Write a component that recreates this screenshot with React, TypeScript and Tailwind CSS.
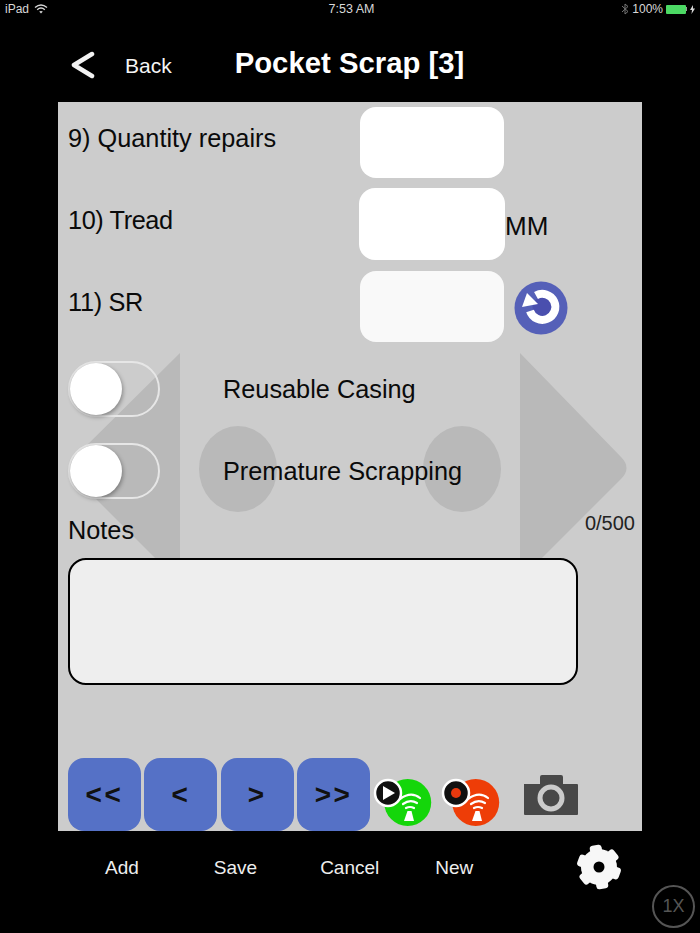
import React from "react";

const font = "font-['Liberation_Sans',Arial,sans-serif]";

const WifiBadge = ({ color, record }: { color: string; record?: boolean }) => (
    <svg width="60" height="56" viewBox="0 0 60 56">
        <circle cx="34.7" cy="29.5" r="23.5" fill={color} />
        <g fill="none" stroke="#fff" strokeWidth="2.2" strokeLinecap="round">
            <path d="M27 26 Q38 18 47 25" />
            <path d="M30 31 Q37 26 44 30" />
            <path d="M33 35 Q37 33 41 35" />
        </g>
        <path d="M34.5 38 L38.5 38 L41 48 L31 48 Z" fill="#fff" />
        <circle cx="15" cy="20" r="13" fill="#111" stroke="#fff" strokeWidth="2.5" />
        {record ? <circle cx="15" cy="20" r="5" fill="#e8390e" /> : <path d="M10 13 L22 20 L10 27 Z" fill="#fff" />}
    </svg>
);

const Camera = () => (
    <svg width="56" height="42" viewBox="0 0 56 42">
        <path d="M1 10 H17 V3 Q17 1 19 1 H38 Q40 1 40 3 V10 H54 Q55 10 55 11 V40 Q55 41 54 41 H2 Q1 41 1 40 Z" fill="#484848" />
        <circle cx="28" cy="24" r="11" fill="none" stroke="#cbcbcb" strokeWidth="5" />
    </svg>
);

const Gear = () => (
    <svg width="46" height="46" viewBox="0 0 46 46">
        <g transform="rotate(-10 23 23)" fill="#f7f7f7">
            <circle cx="23" cy="23" r="18" />
            <rect x="17" y="1" width="12" height="44" rx="3" />
            <rect x="17" y="1" width="12" height="44" rx="3" transform="rotate(60 23 23)" />
            <rect x="17" y="1" width="12" height="44" rx="3" transform="rotate(120 23 23)" />
        </g>
        <circle cx="23" cy="23" r="5.5" fill="#000" />
    </svg>
);

const Reset = () => (
    <svg width="54" height="54" viewBox="0 0 54 54" className="ml-[10px] mt-[2px]">
        <circle cx="27" cy="27" r="26.5" fill="#5560b8" />
        <circle cx="28.5" cy="26" r="10" fill="#4a4fae" />
        <path d="M22 14.5 A13 13 0 1 1 16 30" fill="none" stroke="#fff" strokeWidth="8" />
        <path d="M13 12 L8 26 L24 23 Z" fill="#fff" />
    </svg>
);

const FieldRow = ({ label, children, className = "", inputClass = "w-[145px] h-[71px] bg-white", labelClass = "" }: { label: string; children?: React.ReactNode; className?: string; inputClass?: string; labelClass?: string }) => (
    <div className={`flex items-center ${className}`}>
        <div className={`w-[292px] text-[25.3px] leading-none text-[#0a0a0a] pb-[8px] ${labelClass}`}>{label}</div>
        <div className={`rounded-[16px] ${inputClass}`}></div>
        {children}
    </div>
);

const Toggle = ({ label }: { label: string }) => (
    <div className="flex items-center h-[56px]">
        <div className="relative w-[92px] h-[56px] rounded-full border-2 border-[#e6e6e6]">
            <div className="absolute left-0 top-0 w-[52px] h-[52px] rounded-full bg-white shadow-[1px_2px_4px_rgba(0,0,0,0.35)]"></div>
        </div>
        <span className="ml-[63px] text-[25.3px] leading-none text-[#0a0a0a] mt-[1px]">{label}</span>
    </div>
);

const NavButton = ({ label }: { label: string }) => (
    <button className="w-[72.9px] h-[73px] rounded-[16px] bg-[#5571c6] text-[28px] font-bold tracking-[2.5px] text-[#111]">{label}</button>
);

const BarLabel = ({ label, className }: { label: string; className: string }) => (
    <span className={`text-[19px] leading-none text-[#eeeeee] mt-[1px] ${className}`}>{label}</span>
);

const App = () => {
    return (
        <div className={`relative w-[700px] h-[933px] bg-black overflow-hidden ${font}`}>
            {/* status bar */}
            <div className="flex items-center justify-between h-[18px] px-[5px] text-[12px] text-[#d8d8d8]">
                <div className="flex items-center gap-[5px] w-[120px]">
                    <span>iPad</span>
                    <svg width="14" height="10" viewBox="0 0 14 10" fill="none" stroke="#d8d8d8" strokeWidth="1.4">
                        <path d="M1 3.5 Q7 -1.5 13 3.5" />
                        <path d="M3.2 5.7 Q7 2.5 10.8 5.7" />
                        <path d="M7 9.5 L5.2 7.6 Q7 6.2 8.8 7.6 Z" fill="#d8d8d8" stroke="none" />
                    </svg>
                </div>
                <span className="pl-[3px] text-[12.5px]">7:53 AM</span>
                <div className="flex items-center justify-end gap-[3px] w-[120px]">
                    <svg width="8" height="12" viewBox="0 0 8 12" fill="none" stroke="#777" strokeWidth="1">
                        <path d="M1 3 L7 8.5 L4 11 V1 L7 3.5 L1 9" />
                    </svg>
                    <span>100%</span>
                    <div className="w-[20px] h-[9px] bg-[#4cd964] rounded-[1px]"></div>
                    <div className="w-[1px] h-[4px] bg-[#999] -ml-[3px]"></div>
                    <svg width="5" height="9" viewBox="0 0 5 9"><path d="M3 0 L0 5 H2 L1.5 9 L5 3.5 H3 Z" fill="#d8d8d8" /></svg>
                </div>
            </div>

            {/* header */}
            <div className="flex items-center h-[84px] text-white">
                <svg width="24" height="28" viewBox="0 0 24 28" className="ml-[71px] mt-[10px]" fill="none" stroke="#f2f2f2" strokeWidth="4.5" strokeLinecap="round" strokeLinejoin="round">
                    <path d="M21 3 L3 14 L21 25" />
                </svg>
                <span className="ml-[30px] mt-[11px] text-[21px] font-medium text-[#f5f5f5]">Back</span>
                <span className="ml-[63px] mt-[6px] text-[29.3px] font-bold">Pocket Scrap [3]</span>
            </div>

            {/* panel */}
            <div className="relative mx-[58px] h-[729px] bg-[#cccccc] pl-[10px] pt-[5px]">
                {/* faded background arrows */}
                <svg width="584" height="210" viewBox="0 0 584 210" className="absolute left-0 top-[251px]" fill="#b9b9b9">
                    <path d="M122 0 V205 H97 L17 125 Q6 115 17 104 Z" />
                    <ellipse cx="180" cy="116" rx="39" ry="43" />
                    <ellipse cx="404" cy="116" rx="39" ry="43" />
                    <path d="M462 0 L563 104 Q574 115 563 126 L484 205 H462 Z" />
                </svg>

                <div className="relative flex flex-col h-full">
                    <FieldRow label="9) Quantity repairs" inputClass="w-[144px] h-[71px] bg-white" />
                    <FieldRow label="10) Tread" className="mt-[10px]" labelClass="tracking-[-0.4px] pt-[1px]" inputClass="w-[146px] h-[72px] -ml-[1px] bg-white">
                        <span className="text-[26px] leading-none text-[#0a0a0a] mt-[3px]">MM</span>
                    </FieldRow>
                    <FieldRow label="11) SR" className="mt-[11px]" labelClass="tracking-[-0.3px]" inputClass="w-[144px] h-[71px] bg-[#f9f9f9]">
                        <Reset />
                    </FieldRow>

                    <div className="flex flex-col gap-[26px] mt-[19px]">
                        <Toggle label="Reusable Casing" />
                        <Toggle label="Premature Scrapping" />
                    </div>

                    <div className="flex items-start justify-between mt-[6px] h-[53px] pr-[7px]">
                        <span className="text-[25.3px] leading-none text-[#0a0a0a] mt-[13px]">Notes</span>
                        <span className="text-[20px] leading-none text-[#222] mt-[8px]">0/500</span>
                    </div>

                    <div className="w-[510px] h-[127px] rounded-[18px] border-2 border-black bg-[#eeeeee]"></div>

                    <div className="flex items-end mt-auto">
                        <div className="flex gap-[3.5px]">
                            <NavButton label="<<" />
                            <NavButton label="<" />
                            <NavButton label=">" />
                            <NavButton label=">>" />
                        </div>
                        <div className="flex items-end ml-[3px] mb-[2px] gap-[8px]">
                            <WifiBadge color="#14d60a" />
                            <WifiBadge color="#ee3d07" record />
                        </div>
                        <div className="ml-[22px] mb-[15px]">
                            <Camera />
                        </div>
                    </div>
                </div>
            </div>

            {/* bottom bar */}
            <div className="flex items-center h-[72px]">
                <BarLabel label="Add" className="ml-[105px]" />
                <BarLabel label="Save" className="ml-[75px]" />
                <BarLabel label="Cancel" className="ml-[63px]" />
                <BarLabel label="New" className="ml-[56px]" />
                <div className="ml-[103px]"><Gear /></div>
            </div>

            {/* zoom badge */}
            <div className="absolute left-[652px] top-[885px] w-[43px] h-[43px] rounded-full border-2 border-[#555] flex items-center justify-center text-[18px] text-[#555]">1X</div>
        </div>
    );
};

export default App;
